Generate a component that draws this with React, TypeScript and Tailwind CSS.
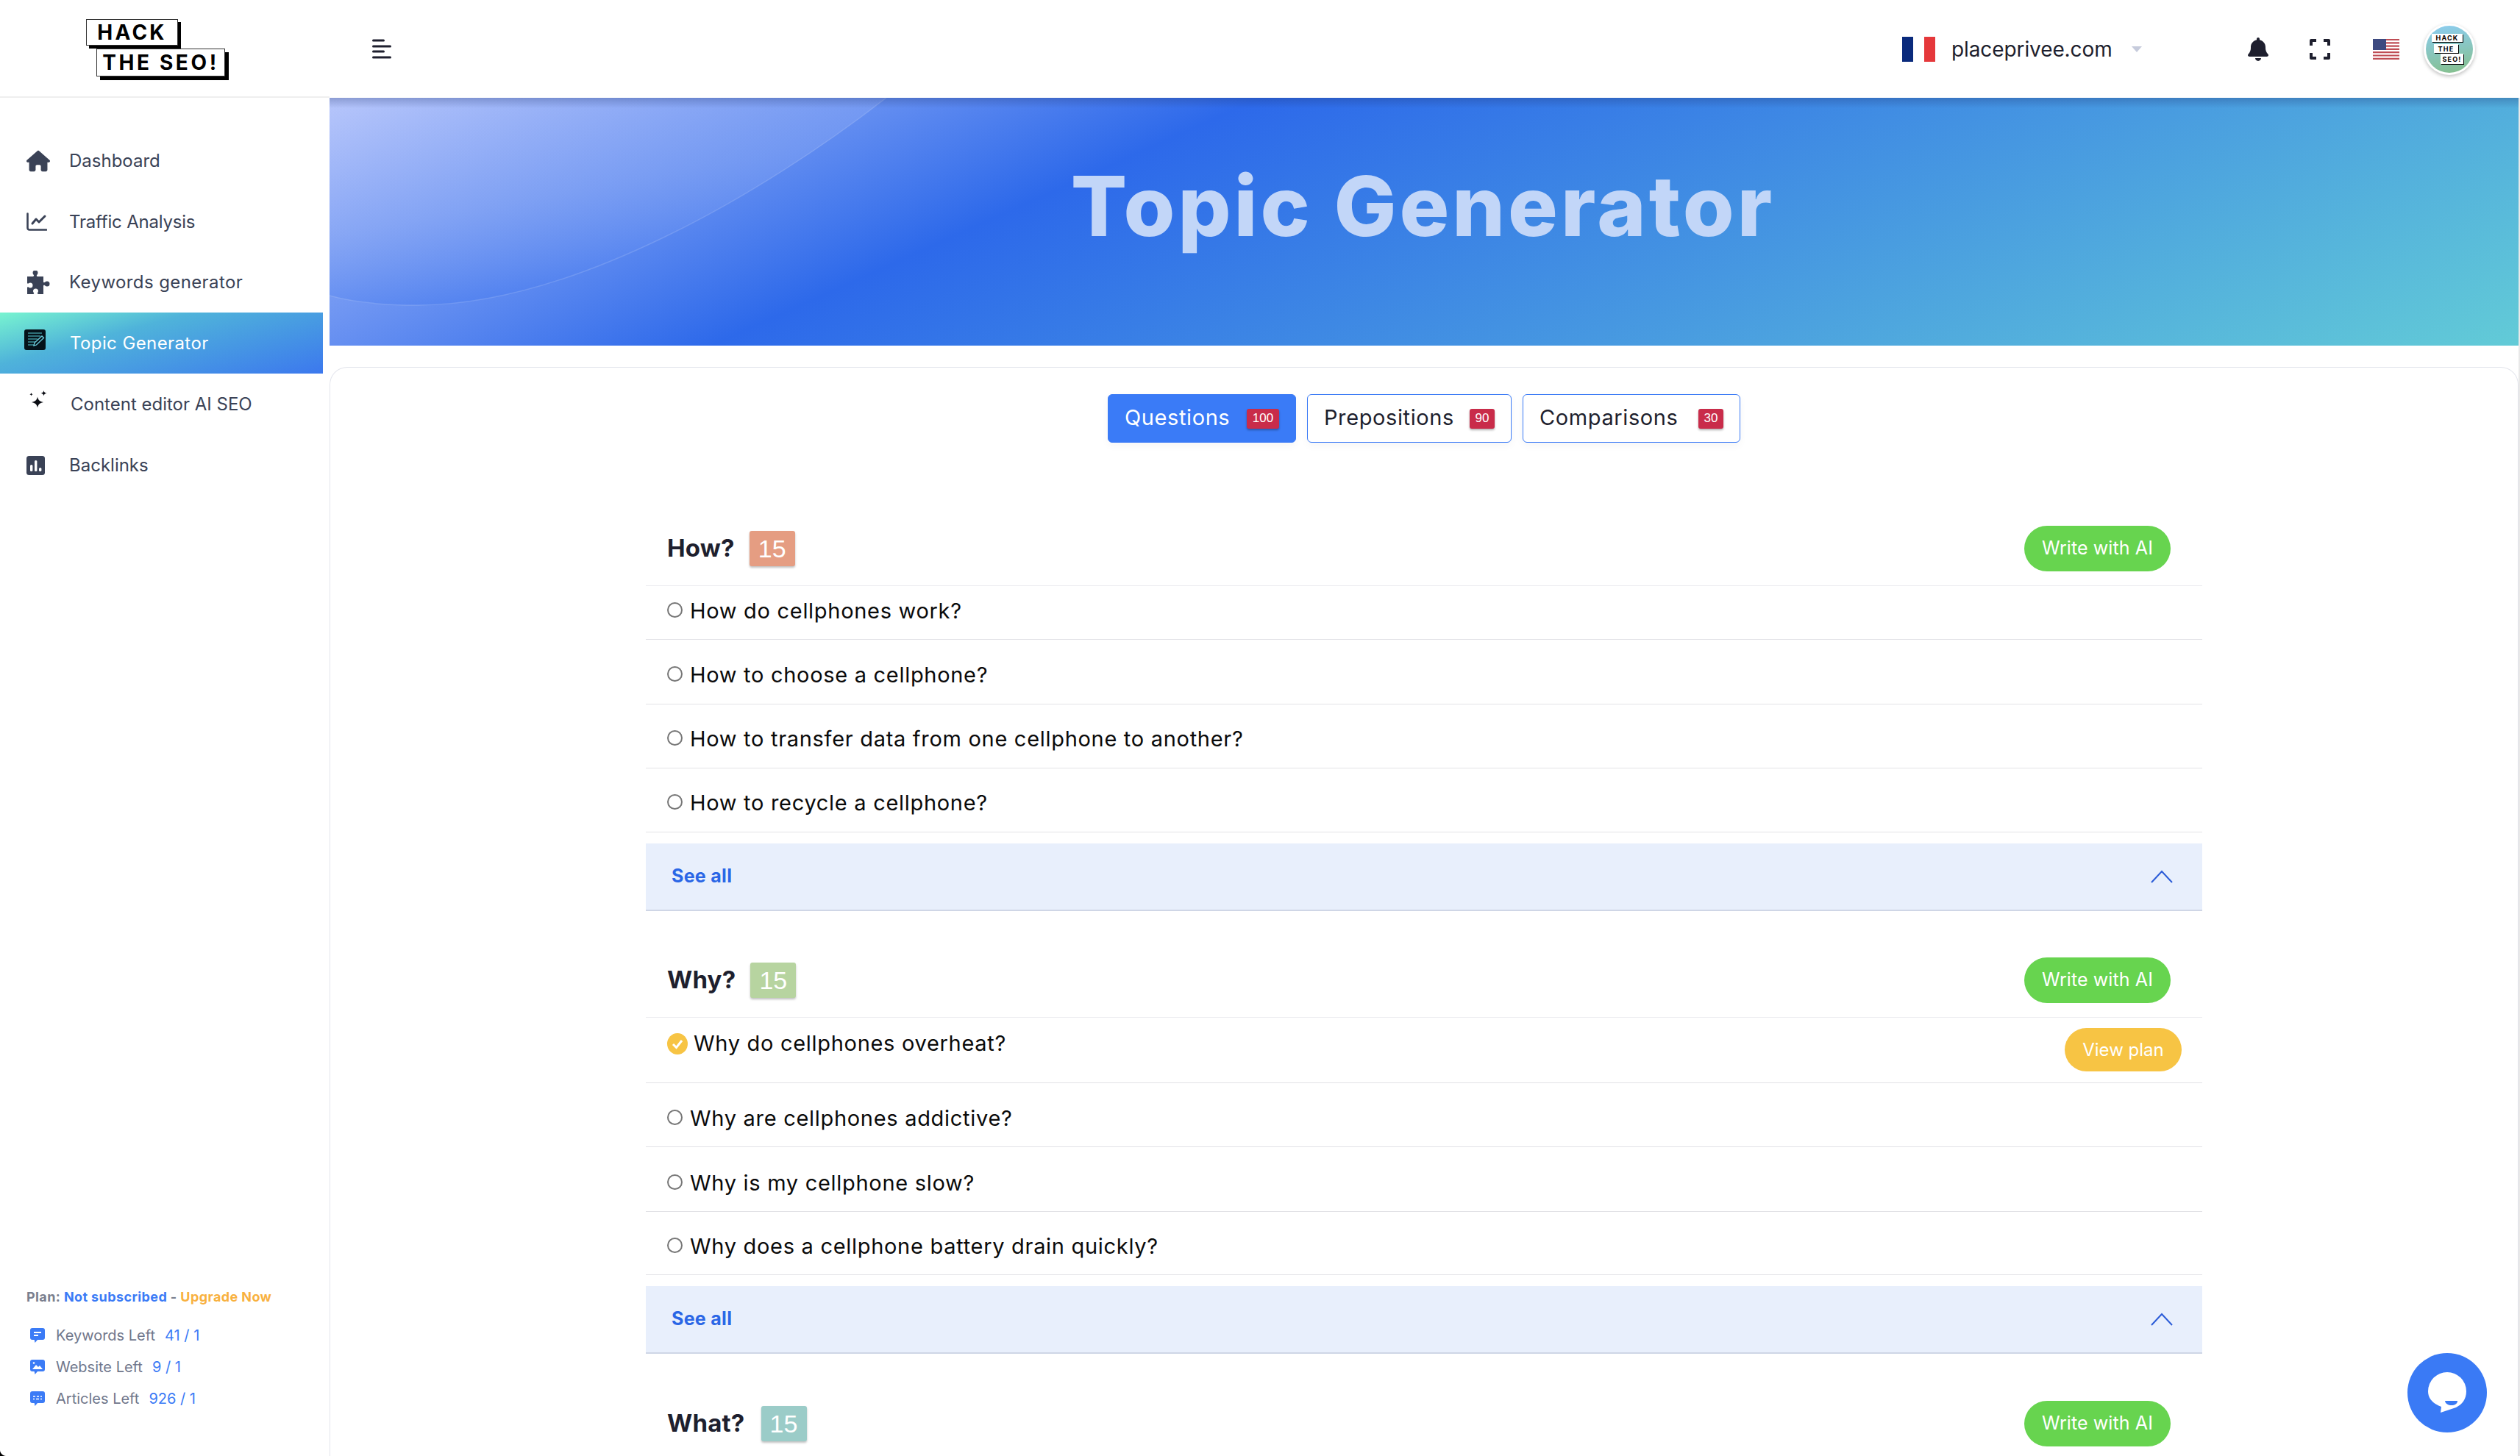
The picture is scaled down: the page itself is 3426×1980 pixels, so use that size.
import React from "react";
import { FaHouse, FaBell } from "react-icons/fa6";

const TopicIcon = () => (
  <svg width="29" height="28" viewBox="0 0 29 28">
    <rect width="29" height="28" rx="3" fill="#05121a" />
    <path d="M5 5h19M5 9h17M5 13h13M5 17h10M5 21h8" stroke="#3d8f98" strokeWidth="1.6" />
    <path d="M13 22l1-4L24 9l2.500 2.500L16.500 21z" fill="none" stroke="#6fd0e0" strokeWidth="1.300" />
  </svg>
);
const ChartIcon = () => (
  <svg width="28" height="25" viewBox="0 0 28 25" fill="none" stroke="#3a4256" strokeLinecap="round" strokeLinejoin="round">
    <path d="M1.500 1.500V21a2.500 2.500 0 0 0 2.500 2.500H27" strokeWidth="2.600" />
    <path d="M8 15l5-6 4 4 8-8" strokeWidth="3" />
  </svg>
);
const PuzzleIcon = () => (
  <svg width="32" height="32" viewBox="0 0 32 32" fill="#3a4256">
    <path d="M1 8h8c1.300 0 1.500-1 .8-2-.8-.9-1.300-1.900-1.300-3a3.500 3.500 0 0 1 7 0c0 1.100-.5 2.100-1.300 3-.7 1-.5 2 .8 2h8v7c0 1.300 1 1.500 2 .8.9-.8 1.900-1.300 3-1.300a3.500 3.500 0 0 1 0 7c-1.100 0-2.100-.5-3-1.300-1-.7-2-.5-2 .8V32h-7c-1.300 0-1.500-1-.8-2 .5-.6.8-1.300.8-2a3.500 3.500 0 0 0-7 0c0 .7.3 1.400.8 2 .7 1 .5 2-.8 2H1v-8.500c0-1.300 1-1.500 2-.8.6.5 1.300.8 2 .8a3.500 3.500 0 0 0 0-7c-.7 0-1.400.3-2 .8-1 .7-2 .5-2-.8z" />
  </svg>
);
const SparkIcon = () => (
  <svg width="24" height="24" viewBox="0 0 24 24" fill="#0b0d14">
    <path d="M11 4c.8 4.300 2.700 6.300 8 7.500-5.300 1.200-7.200 3.200-8 7.500-.8-4.300-2.700-6.300-8-7.500 5.300-1.200 7.200-3.200 8-7.500z" transform="translate(0 4.500)" />
    <path d="M19.500 0c.4 2.200 1.300 3.200 4 3.800-2.700.6-3.600 1.600-4 3.800-.4-2.200-1.300-3.200-4-3.800 2.700-.6 3.600-1.600 4-3.800z" />
    <path d="M2.500 3c.2 1.300.8 1.900 2.300 2.300-1.500.4-2.100 1-2.300 2.300-.2-1.300-.8-1.900-2.300-2.300 1.500-.4 2.100-1 2.300-2.300z" />
  </svg>
);
const BarsIcon = () => (
  <svg width="25" height="26" viewBox="0 0 25 26">
    <rect width="25" height="26" rx="3.500" fill="#3a4256" />
    <rect x="5" y="12" width="3.400" height="9" rx="1.500" fill="#fff" />
    <rect x="11" y="6" width="3.400" height="15" rx="1.500" fill="#fff" />
    <rect x="17" y="16" width="3.400" height="5" rx="1.500" fill="#fff" />
  </svg>
);
const MsgIcon = ({ kind }: { kind: number }) => (
  <svg width="20" height="20" viewBox="0 0 20 20" className="shrink-0">
    <path d="M3 0h14a3 3 0 0 1 3 3v10a3 3 0 0 1-3 3h-7l-3.500 4-.8-4H3a3 3 0 0 1-3-3V3a3 3 0 0 1 3-3z" fill="#3b7bf6" />
    {kind === 0 && <path d="M5 6h10M5 10h6" stroke="#fff" strokeWidth="1.800" />}
    {kind === 1 && <><path d="M3 13l5-6 3 3 2-2 4 5z" fill="#fff" /><circle cx="5" cy="4.500" r="1.300" fill="#fff" /></>}
    {kind === 2 && <path d="M4 7h3M9 7h3M14 7h2M4 10.500h2M8 10.500h4M14 10.500h2" stroke="#fff" strokeWidth="1.500" />}
  </svg>
);

const navItems = [
  { label: "Dashboard", icon: <FaHouse size={32} color="#3a4256" />, cls: "pl-[36px] pt-[2px]", slot: "w-[58px]", text: "" },
  { label: "Traffic Analysis", icon: <ChartIcon />, cls: "pl-[36px] pt-[2px]", slot: "w-[58px]", text: "tracking-[-0.2px]" },
  { label: "Keywords generator", icon: <PuzzleIcon />, cls: "pl-[36px]", slot: "w-[58px]", text: "tracking-[0.4px]" },
  { label: "Topic Generator", icon: <TopicIcon />, cls: "pl-[33px] w-[439px] text-white bg-[linear-gradient(165deg,#78f4d0_0%,#4fb3da_35%,#3c78ee_100%)]", slot: "w-[62px] -mt-[10px]", text: "tracking-[0.4px]" },
  { label: "Content editor AI SEO", icon: <SparkIcon />, cls: "pl-[40px]", slot: "w-[56px] -mt-[14px]", text: "" },
  { label: "Backlinks", icon: <BarsIcon />, cls: "pl-[36px]", slot: "w-[58px]", text: "" },
];

const Radio = () => <span className="shrink-0 w-[21px] h-[21px] rounded-full border-2 border-[#777] -mt-[3px]" />;

const Row = ({ text, cls }: { text: string; cls: string }) => (
  <div className={`flex items-end gap-[10px] px-[29px] border-b border-[#e2e2e6] ${cls}`}>
    <div className="flex items-center gap-[10px] h-[42px]">
      <Radio />
      <span className="text-[29px] leading-[42px] tracking-[0.7px] text-[#0a0a0a]">{text}</span>
    </div>
  </div>
);

const Header = ({ title, badge, color, gap, mt }: { title: string; badge: string; color: string; gap: string; mt: string }) => (
  <div className={`flex items-center justify-between pl-[29px] pr-[43px] pb-[19px] border-b border-[#ececf0] ${mt}`}>
    <div className={`flex items-center ${gap}`}>
      <span className="text-[33px] font-bold tracking-[0.2px] text-[#1e1f2e]">{title}</span>
      <span
        className={`flex items-center justify-center w-[62px] h-[48px] rounded-[3px] shadow-[0_2px_3px_rgba(0,0,0,0.25)] text-white text-[34px] font-['Liberation_Sans',sans-serif] ${color}`}
      >
        {badge}
      </span>
    </div>
    <button className="w-[199px] h-[62px] rounded-full bg-[#67d44f] text-white text-[25px] tracking-[0.1px]">Write with AI</button>
  </div>
);

const SeeAll = () => (
  <div className="mt-[15px] h-[92px] flex items-center justify-between pl-[35px] pr-[40px] bg-[#e8effc] border-b-2 border-[#cfd6e6]">
    <span className="text-[25px] font-bold tracking-[0.3px] text-[#2a66e6]">See all</span>
    <svg width="30" height="18" viewBox="0 0 30 18" fill="none" stroke="#2a5bd7" strokeWidth="2">
      <path d="M1 17L15 2l14 15" />
    </svg>
  </div>
);

const Tab = ({ label, count, active, w, bw }: { label: string; count: string; active?: boolean; w: string; bw: string }) => (
  <div
    className={`flex items-center justify-between pl-[22px] pr-[22px] h-[66px] rounded-[6px] border-[1.5px] border-[#3b7bf6] shadow-[0_4px_12px_rgba(0,0,0,0.04)] ${w} ${active ? "bg-[#3a7bf7] text-white" : "bg-white text-[#1e1f2e]"}`}
  >
    <span className="text-[29px] tracking-[0.6px] -mt-[2px]">{label}</span>
    <span className={`flex items-center justify-center h-[27px] rounded-[3px] bg-[#c92c4a] text-white text-[17px] shadow-[0_2px_3px_rgba(0,0,0,0.3)] font-['Liberation_Sans',sans-serif] ${bw}`}>
      {count}
    </span>
  </div>
);

const curve = "M0 269C40 280 80 282 119 282C330 282 590 130 757 0";

export default function App() {
  return (
    <div className="relative h-screen w-full overflow-hidden flex flex-col bg-white font-['Inter',sans-serif]">
      <header className="h-[133px] shrink-0 flex items-center bg-white">
        <div className="w-[448px] h-full shrink-0 border-b-2 border-[#eeeeee] flex items-center">
          <div className="pl-[117px] flex flex-col items-start -mt-[1px]">
            <div className="w-[125px] h-[36px] bg-white border border-[#333] shadow-[4px_4px_0_#000] flex items-center justify-center font-bold text-[28px] tracking-[3.200px] text-black">
              HACK
            </div>
            <div className="relative mt-[4px] ml-[14px] w-[175px] h-[38px] bg-white border border-[#333] shadow-[5px_5px_0_#000] flex items-center justify-center font-bold text-[28px] tracking-[3.600px] text-black whitespace-nowrap">
              THE SEO!
            </div>
          </div>
        </div>
        <svg width="26" height="27" viewBox="0 0 26 27" className="ml-[58px]" stroke="#1e1f2e" strokeWidth="3" strokeLinecap="round">
          <path d="M1.500 2h14M1.500 10h23M1.500 17h14M1.500 25h23" />
        </svg>
        <div className="ml-auto pr-[61px] flex items-center">
          <div className="flex w-[45px] h-[34px]">
            <span className="w-[15px] bg-[#0a2a7c]" />
            <span className="w-[15px] bg-white" />
            <span className="w-[15px] bg-[#e5383b]" />
          </div>
          <span className="ml-[22px] w-[216px] text-[28px] text-[#1e1f2e] whitespace-nowrap tracking-[-0.1px]">placeprivee.com</span>
          <svg width="14" height="8" viewBox="0 0 14 8" className="ml-[29px]" fill="#c6cbdc">
            <path d="M0 0h14L7 8z" />
          </svg>
          <FaBell size={32} color="#1e1f2e" className="ml-[142px]" />
          <svg width="28" height="28" viewBox="0 0 28 28" className="ml-[54px]" fill="none" stroke="#1e1f2e" strokeWidth="4" strokeLinejoin="round">
            <path d="M2 9V2h7M19 2h7v7M26 19v7h-7M9 26H2v-7" />
          </svg>
          <svg width="36" height="28" viewBox="0 0 36 28" className="ml-[58px]">
            <rect width="36" height="28" fill="#fff" />
            <path d="M0 1h36M0 5.300h36M0 9.600h36M0 13.900h36M0 18.200h36M0 22.500h36M0 26.800h36" stroke="#bf4d55" strokeWidth="2.200" />
            <rect width="18" height="15" fill="#3d4a80" />
          </svg>
          <div className="ml-[33px] w-[70px] h-[70px] rounded-full bg-white shadow-[0_2px_5px_rgba(0,0,0,0.25)] p-[3px]">
            <div className="w-full h-full rounded-full bg-[linear-gradient(170deg,#8ccdf2,#85bf8a)] flex flex-col items-start justify-center text-[9px] font-bold text-black leading-none">
              <span className="ml-[8px] w-[42px] h-[11px] bg-white shadow-[1px_1px_0_#000] flex items-center justify-center tracking-[1.200px]">HACK</span>
              <span className="ml-[11px] mt-[3px] w-[33px] h-[12px] bg-white shadow-[1px_1px_0_#000] flex items-center justify-center tracking-[1.200px]">THE</span>
              <span className="ml-[20px] mt-[1px] w-[31px] h-[14px] bg-white shadow-[1px_1px_0_#000] flex items-center justify-center tracking-[1.200px]">SEO!</span>
            </div>
          </div>
        </div>
      </header>

      <div className="flex flex-1 min-h-0">
        <aside className="w-[448px] shrink-0 flex flex-col bg-white">
          <nav className="pt-[43px] flex flex-col">
            {navItems.map((n) => (
              <div key={n.label} className={`h-[83px] flex items-center text-[24px] ${n.label === "Topic Generator" ? "" : "text-[#3a4256]"} ${n.cls}`}>
                <span className={`shrink-0 flex ${n.slot}`}>{n.icon}</span>
                <span className={`whitespace-nowrap ${n.text}`}>{n.label}</span>
              </div>
            ))}
          </nav>
          <div className="mt-auto pl-[36px] pb-[57px]">
            <div className="text-[18px] leading-[24px] font-bold tracking-[0.4px] text-[#7a7f8e] whitespace-nowrap mb-[18px]">
              Plan: <span className="text-[#3b7bf6]">Not subscribed</span> - <span className="text-[#f8b13f]">Upgrade Now</span>
            </div>
            {[
              ["Keywords Left", "41 / 1", 0],
              ["Website Left", "9 / 1", 1],
              ["Articles Left", "926 / 1", 2],
            ].map(([a, b, k]) => (
              <div key={a as string} className="h-[43px] flex items-center pl-[5px] text-[20px]">
                <MsgIcon kind={k as number} />
                <span className="ml-[15px] text-[#70778c]">{a}</span>
                <span className="ml-[13px] text-[#3b7bf6]">{b}</span>
              </div>
            ))}
          </div>
        </aside>

        <main className="flex-1 min-w-0 flex flex-col">
          <section className="relative h-[337px] shrink-0 overflow-hidden flex items-center justify-center bg-[linear-gradient(155.700deg,#b7c6fb_0%,#2d69ea_34%,#62cbd7_100%)]">
            <svg className="absolute left-0 top-0" width="800" height="300" viewBox="0 0 800 300">
              <defs>
                <linearGradient id="heroCurve" x1="0.150" y1="0" x2="0.620" y2="0.950">
                  <stop offset="0" stopColor="#b7c6fb" stopOpacity="0.1" />
                  <stop offset="0.500" stopColor="#86a6f4" stopOpacity="0.45" />
                  <stop offset="1" stopColor="#3f75ee" stopOpacity="0.9" />
                </linearGradient>
              </defs>
              <path d={`${curve}H0z`} fill="url(#heroCurve)" />
              <path d={curve} fill="none" stroke="#ffffff" strokeOpacity="0.14" strokeWidth="1.500" />
            </svg>
            <div className="absolute inset-x-0 top-0 h-[14px] bg-[linear-gradient(180deg,rgba(30,50,110,0.28),rgba(30,50,110,0))]" />
            <h1 className="relative -mt-[42px] -ml-[3px] text-[113px] font-extrabold tracking-[4px] text-[#c2d6f8] whitespace-nowrap">Topic Generator</h1>
          </section>

          <section className="mt-[29px] flex-1 rounded-t-[24px] border border-b-0 border-[#e3e5ec] bg-white overflow-hidden">
            <div className="mt-[36px] flex justify-center gap-[15px]">
              <Tab label="Questions" count="100" active w="w-[256px]" bw="w-[44px]" />
              <Tab label="Prepositions" count="90" w="w-[278px]" bw="w-[34px]" />
              <Tab label="Comparisons" count="30" w="w-[296px]" bw="w-[34px]" />
            </div>

            <div className="w-[2116px] mx-auto">
              <Header title="How?" badge="15" color="bg-[#e59d82]" gap="gap-[20px]" mt="mt-[113px]" />
              <Row text="How do cellphones work?" cls="h-[73px] pb-[17px]" />
              <Row text="How to choose a cellphone?" cls="h-[88px] pb-[18px]" />
              <Row text="How to transfer data from one cellphone to another?" cls="h-[87px] pb-[18px]" />
              <Row text="How to recycle a cellphone?" cls="h-[87px] pb-[18px]" />
              <SeeAll />

              <Header title="Why?" badge="15" color="bg-[#b7d4a0]" gap="gap-[20px]" mt="mt-[63px]" />
              <div className="h-[89px] flex items-start justify-between pl-[29px] pr-[28px] pt-[14px] border-b border-[#e2e2e6]">
                <div className="flex items-center gap-[8px] h-[42px]">
                  <svg width="28" height="29" viewBox="0 0 28 29" className="shrink-0">
                    <ellipse cx="14" cy="14.500" rx="14" ry="14.500" fill="#f7c444" />
                    <path d="M8 15l4.500 4.500L20 10" fill="none" stroke="#fff" strokeWidth="3" />
                  </svg>
                  <span className="text-[29px] leading-[42px] tracking-[0.7px] text-[#0a0a0a]">Why do cellphones overheat?</span>
                </div>
                <button className="w-[159px] h-[59px] rounded-full bg-[#f7c444] text-white text-[24px]">View plan</button>
              </div>
              <Row text="Why are cellphones addictive?" cls="h-[87px] pb-[17px]" />
              <Row text="Why is my cellphone slow?" cls="h-[88px] pb-[17px]" />
              <Row text="Why does a cellphone battery drain quickly?" cls="h-[86px] pb-[17px]" />
              <SeeAll />

              <Header title="What?" badge="15" color="bg-[#9bccc8]" gap="gap-[22px]" mt="mt-[64px]" />
            </div>
          </section>
        </main>
        <div className="w-[2px] shrink-0 bg-[#e8e8e8]" />
      </div>

      <div className="absolute right-[45px] bottom-[32px] w-[108px] h-[108px] rounded-full bg-[#3a7af5] flex items-center justify-center">
        <svg width="52" height="56" viewBox="0 0 52 56">
          <path d="M26 0a26 26 0 0 1 26 26c0 11-6 18-14 22L17 55l1-8C7 43 0 36 0 26A26 26 0 0 1 26 0z" fill="#fff" />
          <path d="M23 39h17c0 8-16 8-17 0z" fill="#3a7af5" />
        </svg>
      </div>
      <svg className="absolute left-0 bottom-0" width="8" height="8" viewBox="0 0 8 8">
        <path d="M0 0C0 4 4 8 8 8H0z" fill="#000" />
      </svg>
    </div>
  );
}
